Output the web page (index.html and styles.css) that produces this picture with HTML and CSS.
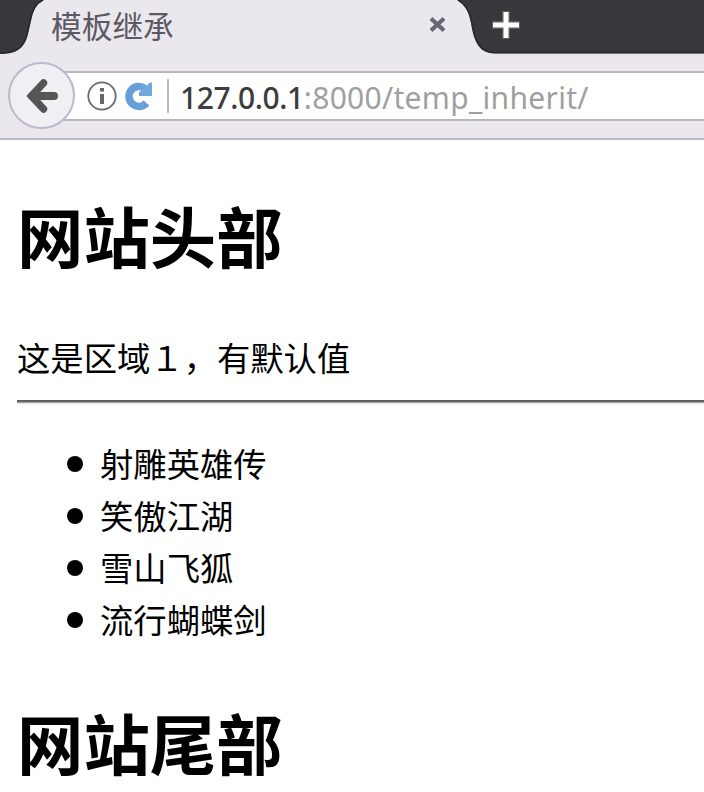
FILE: index.html
```html
<!DOCTYPE html>
<html lang="zh-CN">
<head>
<meta charset="utf-8">
<title>模板继承</title>
<link rel="stylesheet" href="styles.css">
</head>
<body>
<header class="tabs">
  <svg class="tab-shape" width="704" height="54" viewBox="0 0 704 54">
    <path d="M0 54C16 54 24 49 28 34L31 21C33 10 37 3 44 0H457C465 4 469 12 471 23C474 43 480 53 494 53.500H704V54Z" fill="#eae8ed"/>
    <path d="M0 53C16 53 24 48 27 34L30 21C32 10 36 3 43 0M458 0C466 4 470 12 472 23C475 43 481 52.500 494 52.500H704" fill="none" stroke="#29292d" stroke-width="1.500"/>
  </svg>
  <span class="tab-title">模板继承</span>
  <svg class="tab-close" width="20" height="20" viewBox="0 0 20 20"><path d="M3 3.500L16 15.500M16 3.500L3 15.500" stroke="#6b6673" stroke-width="4.200"/></svg>
  <svg class="tab-new" width="32" height="32" viewBox="0 0 32 32"><path d="M16 2V30M2 16H30" stroke="#5c5c5c" stroke-width="8"/><path d="M16 3V29M3 16H29" stroke="#fff" stroke-width="5"/></svg>
</header>
<nav class="toolbar">
  <div class="back"><svg width="34" height="36" viewBox="0 0 34 36"><path d="M18.500 5L6.500 18L18.500 31" fill="none" stroke="#555" stroke-width="7.500" stroke-linecap="round"/><path d="M7 18H29" stroke="#555" stroke-width="8" stroke-linecap="round"/></svg></div>
  <div class="address">
    <svg class="info" width="32" height="32" viewBox="0 0 32 32"><circle cx="16" cy="16" r="13.700" fill="none" stroke="#6b6b6b" stroke-width="1.800"/><path d="M16 8V11.500M16 14V24" stroke="#666" stroke-width="4"/></svg>
    <svg class="reload" width="30" height="32" viewBox="0 0 30 32"><path d="M21 8.500A10 10 0 1 0 22.500 23" fill="none" stroke="#699fd8" stroke-width="7.500"/><path d="M28 2.500V16H15V12L19 10L18 5L23 6L25 3Z" fill="#73a8de"/></svg>
    <span class="divider"></span>
    <span class="url"><span class="host">127.0.0.1</span><span class="path">:8000/temp_inherit/</span></span>
  </div>
</nav>
<main class="page">
  <h1>网站头部</h1>
  <p>这是区域１，有默认值</p>
  <hr>
  <ul>
    <li>射雕英雄传</li>
    <li>笑傲江湖</li>
    <li>雪山飞狐</li>
    <li>流行蝴蝶剑</li>
  </ul>
  <h1 class="foot">网站尾部</h1>
</main>
</body>
</html>
```
FILE: styles.css
```css
* { box-sizing: border-box; }
body {
  margin: 0;
  height: 792px;
  overflow: hidden;
  background: #fff;
  color: #000;
  font-family: "Noto Sans CJK SC", sans-serif;
}
svg { display: block; flex: none; }
.tabs {
  position: relative;
  display: flex;
  height: 54px;
  background: #38373c;
}
.tab-shape { position: absolute; left: 0; top: 0; }
.tab-title {
  position: relative;
  width: 377px;
  margin-left: 51px;
  font-size: 30.7px;
  line-height: 50px;
  color: #5c5864;
}
.tab-close { position: relative; margin-top: 15px; }
.tab-new { position: relative; margin: 9px 0 0 42px; }
.toolbar {
  display: flex;
  align-items: flex-start;
  height: 86px;
  padding: 8px 0 0 8px;
  background: #eae8ed;
  border-bottom: 2px solid #bdb9cc;
}
.back {
  z-index: 1;
  flex: none;
  display: flex;
  align-items: center;
  justify-content: center;
  width: 67px;
  height: 67px;
  border: 2px solid #bdb8ca;
  border-radius: 50%;
  background: #f0eff4;
}
.address {
  flex: 1;
  display: flex;
  align-items: center;
  height: 50px;
  margin: 9px 0 0 -15px;
  padding-left: 26px;
  border: solid #b9b5c7;
  border-width: 2px 0;
  background: #fff;
}
.info { width: 32px; }
.reload { margin-left: 6px; }
.divider { width: 2px; height: 34px; margin-left: 13px; background: #bcb8ca; }
.url {
  margin-left: 11px;
  padding-top: 3px;
  font-family: "Noto Sans", sans-serif;
  font-size: 30px;
  line-height: 43px;
  white-space: nowrap;
}
.host { color: #3d3d3d; font-weight: 500; letter-spacing: -0.4px; }
.path { color: #a09fa0; letter-spacing: 0.3px; }
.page { padding: 48px 0 0 17px; }
h1 { margin: 0; font-size: 66.4px; line-height: 92px; font-weight: 700; }
p { margin: 51px 0 0; font-size: 33.35px; line-height: 52px; }
hr { height: 4px; margin: 17px 0 0; border: 0; background: linear-gradient(#606060 0 2px, #aaa 2px 3px, #e5e5e5 3px); }
ul { margin: 33px 0 0; padding: 0; list-style: none; font-size: 33.35px; line-height: 52px; }
li { display: flex; align-items: center; padding-left: 50px; }
li::before { content: ""; width: 16px; height: 16px; margin: 2px 17px 0 0; border-radius: 50%; background: #000; }
.foot { margin-top: 50px; }
```
